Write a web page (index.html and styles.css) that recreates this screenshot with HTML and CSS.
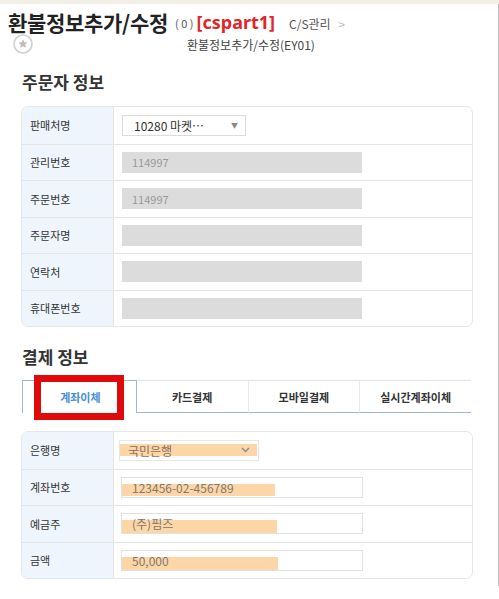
FILE: index.html
```html
<html>

<head>
    <meta charset="utf-8">
    <link rel="stylesheet" href="styles.css">
</head>

<body>
    <div class="topbar"></div>
    <div class="page">
        <div class="head">
            <div class="head__row">
                <h1 class="head__title">환불정보추가/수정</h1>
                <span class="head__count">( 0 )</span>
                <span class="head__user">[cspart1]</span>
                <span class="head__crumb">C/S관리 <i>&gt;</i></span>
            </div>
            <div class="head__row head__row--sub">
                <span class="head__star">
                    <svg width="20" height="20" viewBox="0 0 20 20">
                        <circle cx="10" cy="10" r="9" fill="#fff" stroke="#cfcfcf" stroke-width="1.6"/>
                        <path d="M10 5.2l1.4 3 3.2.3-2.4 2.1.7 3.2L10 12.2l-2.9 1.6.7-3.2-2.4-2.1 3.2-.3z" fill="#bdbdbd"/>
                    </svg>
                </span>
                <span class="head__path">환불정보추가/수정(EY01)</span>
            </div>
        </div>

        <h2 class="section-title">주문자 정보</h2>
        <div class="form-table">
            <div class="form-row">
                <div class="form-label">판매처명</div>
                <div class="form-cell">
                    <div class="select select--shop">10280 마켓⋯<span class="select__arrow">▼</span></div>
                </div>
            </div>
            <div class="form-row">
                <div class="form-label">관리번호</div>
                <div class="form-cell"><div class="field field--off">114997</div></div>
            </div>
            <div class="form-row">
                <div class="form-label">주문번호</div>
                <div class="form-cell"><div class="field field--off">114997</div></div>
            </div>
            <div class="form-row">
                <div class="form-label">주문자명</div>
                <div class="form-cell"><div class="field field--off"></div></div>
            </div>
            <div class="form-row">
                <div class="form-label">연락처</div>
                <div class="form-cell"><div class="field field--off"></div></div>
            </div>
            <div class="form-row">
                <div class="form-label">휴대폰번호</div>
                <div class="form-cell"><div class="field field--off"></div></div>
            </div>
        </div>

        <h2 class="section-title section-title--pay">결제 정보</h2>
        <div class="tabs">
            <div class="tab tab--active">계좌이체<span class="tab__mark"></span></div>
            <div class="tab">카드결제</div>
            <div class="tab">모바일결제</div>
            <div class="tab">실시간계좌이체</div>
        </div>

        <div class="form-table form-table--pay">
            <div class="form-row">
                <div class="form-label">은행명</div>
                <div class="form-cell">
                    <div class="select select--bank">국민은행<span class="select__chev">
                        <svg width="9" height="6" viewBox="0 0 9 6"><path d="M1 1l3.5 3.5L8 1" fill="none" stroke="#8a8a8a" stroke-width="1.4"/></svg>
                    </span></div>
                </div>
            </div>
            <div class="form-row">
                <div class="form-label">계좌번호</div>
                <div class="form-cell"><div class="field field--mark field--mark-a">123456-02-456789</div></div>
            </div>
            <div class="form-row">
                <div class="form-label">예금주</div>
                <div class="form-cell"><div class="field field--mark field--mark-b">(주)핌즈</div></div>
            </div>
            <div class="form-row">
                <div class="form-label">금액</div>
                <div class="form-cell"><div class="field field--mark field--mark-c">50,000</div></div>
            </div>
        </div>
    </div>
</body>

</html>
```

FILE: styles.css
```css
body {
    margin: 0;
    background: #fff;
    font-family: "Noto Sans CJK KR", "Noto Sans", sans-serif;
    color: #333;
}

.topbar {
    height: 4px;
    background: #f3f1e7;
}

.page {
    width: 477px;
    padding: 0 0 0 21px;
    height: 582px;
    border-right: 1px solid #bdbdbd;
}

/* header */
.head {
    margin-left: -13px;
    padding-top: 6px;
}

.head__row {
    display: flex;
    align-items: center;
    height: 24px;
}

.head__title {
    margin: 0;
    font-size: 21px;
    font-weight: bold;
    color: #222;
    line-height: 24px;
    letter-spacing: -0.3px;
}

.head__count {
    margin-left: 7px;
    font-size: 11px;
    color: #555;
    margin-top: 2px;
}

.head__user {
    margin-left: 3px;
    font-size: 18px;
    font-weight: bold;
    color: #e0262b;
    font-family: "Noto Sans", sans-serif;
}

.head__crumb {
    margin-left: 14px;
    font-size: 12px;
    color: #555;
    margin-top: 2px;
}

.head__crumb i {
    font-style: normal;
    color: #bbb;
    margin-left: 5px;
}

.head__row--sub {
    height: 20px;
}

.head__star {
    display: flex;
    flex: none;
    width: 20px;
    height: 20px;
    margin-left: 5px;
}

.head__path {
    margin-left: 154px;
    font-size: 12px;
    color: #444;
    margin-top: 1px;
}

/* sections */
.section-title {
    margin: 16px 0 12px 1px;
    font-size: 17px;
    font-weight: bold;
    line-height: 24px;
    color: #333;
}

.section-title--pay {
    margin-top: 18px;
    margin-bottom: 11px;
}

.form-table {
    width: 450px;
    border: 1px solid #e4e6e9;
    border-radius: 7px;
    overflow: hidden;
}

.form-table--pay {
    margin-top: 18px;
}

.form-row {
    display: flex;
    height: 36.5px;
    box-sizing: border-box;
    border-top: 1px solid #e4e4e4;
}

.form-row:first-child {
    border-top: 0;
}

.form-label {
    width: 83px;
    flex: none;
    padding-left: 8px;
    display: flex;
    align-items: center;
    background: #eef5fd;
    border-right: 1px solid #e4e4e4;
    font-size: 11px;
    color: #333;
}

.form-cell {
    display: flex;
    align-items: center;
    padding-left: 8px;
}

.select {
    position: relative;
    display: flex;
    align-items: center;
    box-sizing: border-box;
    height: 21px;
    border: 1px solid #dcdcdc;
    font-size: 12px;
    color: #333;
}

.select--shop {
    width: 124px;
    padding-left: 11px;
}

.select__arrow {
    margin-left: auto;
    margin-right: 7px;
    font-size: 7px;
    color: #888;
}

.select--bank {
    width: 140px;
    margin-left: -3px;
    padding-left: 8px;
    color: #86705a;
    background: linear-gradient(#fdd6a8, #fdd6a8) 0 3px / 137px 12px no-repeat, #fff;
    border-color: #e6e6e6;
}

.select__chev {
    display: flex;
    margin-left: auto;
    margin-right: 8px;
}

.field {
    box-sizing: border-box;
    width: 240px;
    height: 21px;
    padding-left: 10px;
    display: flex;
    align-items: center;
    font-size: 11px;
    color: #999;
}

.field--off {
    background: #dcdcdc;
}

.field--mark {
    margin-left: -1px;
    width: 242px;
    border: 1px solid #e1e1e1;
    font-size: 12px;
    color: #85776a;
    background-color: #fff;
    background-image: linear-gradient(#fdd6a8, #fdd6a8);
    background-repeat: no-repeat;
}

.field--mark-a {
    background-size: 153px 12px;
    background-position: 0 6px;
}

.field--mark-b {
    background-size: 155px 13px;
    background-position: 0 6px;
    align-items: flex-start;
    padding-top: 1px;
}

.field--mark-c {
    background-size: 156px 13px;
    background-position: 0 6px;
}

/* tabs */
.tabs {
    display: flex;
    width: 449px;
    margin-left: 1px;
    height: 33px;
}

.tab {
    position: relative;
    flex: 1;
    display: flex;
    align-items: center;
    justify-content: center;
    box-sizing: border-box;
    border-top: 1px solid #dfe3e8;
    border-right: 1px solid #e8eaed;
    border-bottom: 1px solid #9fb9d3;
    font-size: 11px;
    font-weight: bold;
    color: #333;
}

.tab:last-child {
    border-right: 0;
}

.tab--active {
    border: 1px solid #9fb9d3;
    border-bottom: 0;
    color: #4a8fd6;
    padding-left: 2px;
}

.tab__mark {
    position: absolute;
    left: 11px;
    top: -6px;
    width: 90px;
    height: 45px;
    box-sizing: border-box;
    border: 7px solid #e10a0a;
}
```
